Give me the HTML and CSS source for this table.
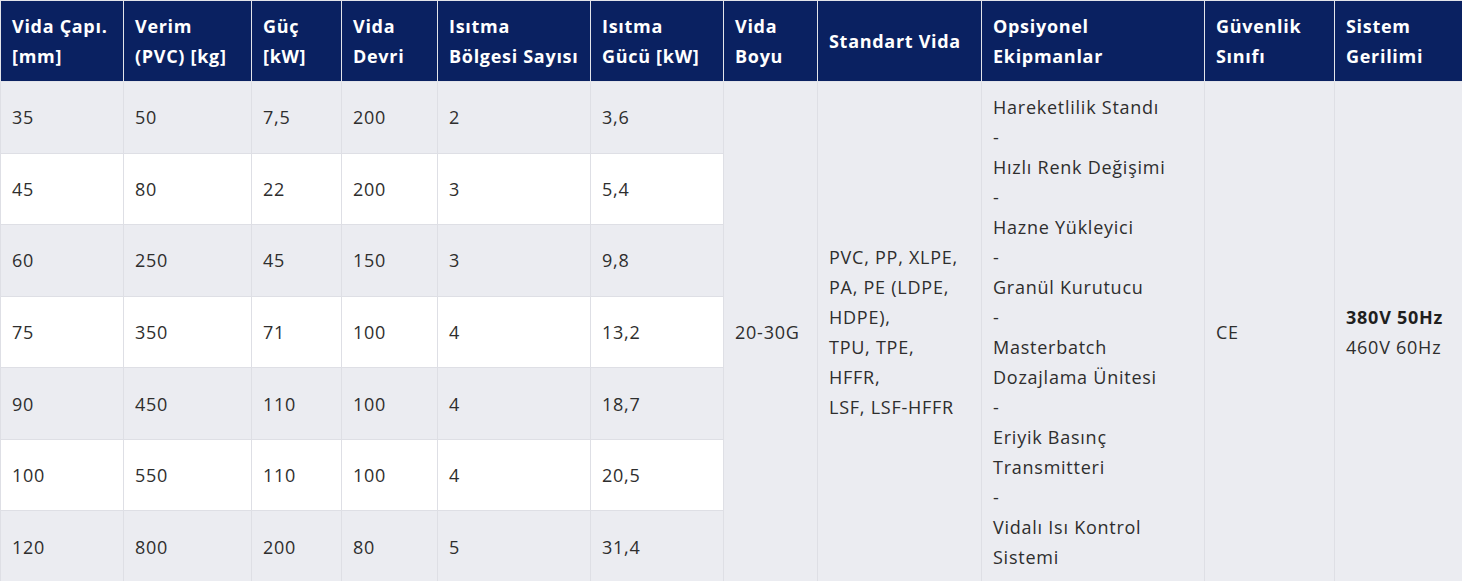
FILE: index.html
```html
<!DOCTYPE html>
<html lang="tr">
<head>
<meta charset="utf-8">
<title>Teknik Özellikler</title>
<link rel="stylesheet" href="styles.css">
</head>
<body>
<table class="spec">
  <colgroup>
    <col class="c1"><col class="c2"><col class="c3"><col class="c4"><col class="c5"><col class="c6"><col class="c7"><col class="c8"><col class="c9"><col class="c10"><col class="c11">
  </colgroup>
  <thead>
    <tr>
      <th>Vida Çapı.<br>[mm]</th>
      <th>Verim<br>(PVC) [kg]</th>
      <th>Güç<br>[kW]</th>
      <th>Vida<br>Devri</th>
      <th>Isıtma<br>Bölgesi Sayısı</th>
      <th>Isıtma<br>Gücü [kW]</th>
      <th>Vida<br>Boyu</th>
      <th>Standart Vida</th>
      <th>Opsiyonel<br>Ekipmanlar</th>
      <th>Güvenlik<br>Sınıfı</th>
      <th>Sistem<br>Gerilimi</th>
    </tr>
  </thead>
  <tbody>
    <tr class="odd">
      <td>35</td><td>50</td><td>7,5</td><td>200</td><td>2</td><td>3,6</td>
      <td rowspan="7" class="span">20-30G</td>
      <td rowspan="7" class="span">PVC, PP, XLPE,<br>PA, PE (LDPE,<br>HDPE),<br>TPU, TPE,<br>HFFR,<br>LSF, LSF-HFFR</td>
      <td rowspan="7" class="span">Hareketlilik Standı<br>-<br>Hızlı Renk Değişimi<br>-<br>Hazne Yükleyici<br>-<br>Granül Kurutucu<br>-<br>Masterbatch<br>Dozajlama Ünitesi<br>-<br>Eriyik Basınç<br>Transmitteri<br>-<br>Vidalı Isı Kontrol<br>Sistemi</td>
      <td rowspan="7" class="span">CE</td>
      <td rowspan="7" class="span"><strong>380V 50Hz</strong><br>460V 60Hz</td>
    </tr>
    <tr class="even"><td>45</td><td>80</td><td>22</td><td>200</td><td>3</td><td>5,4</td></tr>
    <tr class="odd"><td>60</td><td>250</td><td>45</td><td>150</td><td>3</td><td>9,8</td></tr>
    <tr class="even"><td>75</td><td>350</td><td>71</td><td>100</td><td>4</td><td>13,2</td></tr>
    <tr class="odd"><td>90</td><td>450</td><td>110</td><td>100</td><td>4</td><td>18,7</td></tr>
    <tr class="even"><td>100</td><td>550</td><td>110</td><td>100</td><td>4</td><td>20,5</td></tr>
    <tr class="odd"><td>120</td><td>800</td><td>200</td><td>80</td><td>5</td><td>31,4</td></tr>
  </tbody>
</table>
</body>
</html>
```

FILE: styles.css
```css
html, body {
  margin: 0;
  padding: 0;
  background: #ffffff;
}

body {
  font-family: "Open Sans", "Noto Sans", "Liberation Sans", sans-serif;
  font-size: 18px;
  line-height: 30px;
  letter-spacing: 0.75px;
  color: #2e2e2e;
}

.spec {
  width: 1462px;
  border-collapse: collapse;
  table-layout: fixed;
}

.c1 { width: 123px; }
.c2 { width: 128px; }
.c3 { width: 90px; }
.c4 { width: 96px; }
.c5 { width: 153px; }
.c6 { width: 133px; }
.c7 { width: 94px; }
.c8 { width: 164px; }
.c9 { width: 223px; }
.c10 { width: 130px; }
.c11 { width: 128px; }

.spec th {
  background: #0a2161;
  color: #ffffff;
  font-weight: 700;
  letter-spacing: 0.7px;
  text-align: left;
  vertical-align: middle;
  padding: 10px 11px;
  border: 1px solid #e3e4ea;
  white-space: nowrap;
}

.spec td {
  padding: 10px 11px;
  border: 1px solid #dedfe5;
  vertical-align: middle;
  text-align: left;
  white-space: nowrap;
}

.spec tr.odd td {
  background: #ebecf1;
}

.spec tr.even td {
  background: #ffffff;
}

.spec td.span {
  background: #ebecf1;
}

.spec strong {
  font-weight: 700;
  color: #1f1f1f;
}
```
